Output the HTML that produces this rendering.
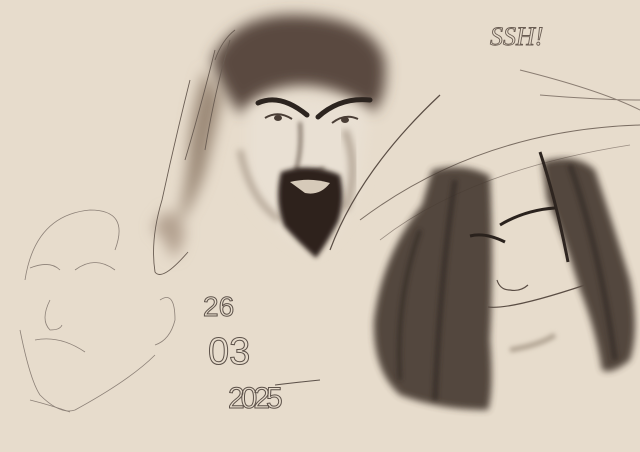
<!DOCTYPE html><html><head><style>
html,body{margin:0;padding:0;width:640px;height:452px;overflow:hidden;background:#e7dccc}
svg{display:block}
</style></head><body>
<svg width="640" height="452" viewBox="0 0 640 452" xmlns="http://www.w3.org/2000/svg">
<defs>
<filter id="b8" x="-50%" y="-50%" width="200%" height="200%"><feGaussianBlur stdDeviation="7"/></filter>
<filter id="b4" x="-50%" y="-50%" width="200%" height="200%"><feGaussianBlur stdDeviation="3.5"/></filter>
<filter id="b2" x="-50%" y="-50%" width="200%" height="200%"><feGaussianBlur stdDeviation="2.5"/></filter>
</defs>
<rect width="640" height="452" fill="#e7dccc"/>
<g filter="url(#b8)">
<path d="M212 60 Q235 12 300 15 Q372 18 385 60 Q388 100 372 112 Q335 82 292 86 Q252 92 242 115 Q222 92 212 60Z" fill="#5a4a3f"/>
<path d="M205 70 Q190 110 188 160 Q183 215 172 232 Q192 210 205 172 Q215 132 222 100Z" fill="#9c8a78"/>
<path d="M152 228 Q166 238 172 258 Q182 252 185 230 Q176 214 166 210Z" fill="#b3a190"/>
</g>
<path d="M248 112 Q300 82 368 112 L358 185 Q340 235 312 250 Q272 228 248 188Z" fill="#e9e0d3" filter="url(#b8)"/>
<path d="M240 150 Q250 200 280 220" stroke="#b3a595" stroke-width="6" fill="none" filter="url(#b4)"/>
<path d="M345 130 Q360 170 345 210" stroke="#b3a595" stroke-width="7" fill="none" filter="url(#b4)"/>
<path d="M258 103 Q280 93 307 115" stroke="#2c241f" stroke-width="5" fill="none" stroke-linecap="round"/>
<path d="M318 117 Q340 97 370 100" stroke="#2c241f" stroke-width="5" fill="none" stroke-linecap="round"/>
<path d="M265 118 Q278 110 292 119" stroke="#4a3e36" stroke-width="2" fill="none"/>
<ellipse cx="278" cy="118" rx="4" ry="3" fill="#4a3e36"/>
<path d="M332 123 Q345 113 358 119" stroke="#4a3e36" stroke-width="2" fill="none"/>
<ellipse cx="345" cy="120" rx="4" ry="3" fill="#4a3e36"/>
<path d="M300 122 Q302 150 296 170 Q310 176 324 168" stroke="#6a5b50" stroke-width="3" fill="none" filter="url(#b2)"/>
<path d="M281 172 Q310 162 340 175 Q346 200 338 222 Q326 245 316 258 Q298 242 284 226 Q274 200 281 172Z" fill="#2d231d" filter="url(#b2)"/>
<path d="M290 182 Q310 177 330 183 Q320 196 305 193Z" fill="#d6cab9"/>
<g stroke="#6a5d53" stroke-width="0.9" fill="none">
<path d="M230 40 Q215 90 205 150 M215 50 Q200 110 185 160 M190 80 Q175 140 162 200 Q150 240 155 272 Q162 282 188 252"/>
<path d="M235 30 Q222 40 215 60"/>
</g>
<path d="M440 95 Q360 170 330 250" stroke="#5a4d44" stroke-width="1.2" fill="none"/>
<path d="M360 220 Q480 130 640 125" stroke="#7a6d62" stroke-width="1" fill="none"/>
<path d="M380 240 Q470 170 630 145" stroke="#9a8d82" stroke-width="0.8" fill="none"/>
<path d="M520 70 Q600 90 640 110 M540 95 Q600 100 640 100" stroke="#8a7d72" stroke-width="1" fill="none"/>
<g filter="url(#b4)" opacity="0.92">
<path d="M432 170 Q465 162 490 176 Q494 260 490 340 Q494 390 488 410 Q440 410 400 395 Q372 370 374 320 Q382 255 422 205Z" fill="#463a32"/>
<path d="M542 162 Q575 152 595 170 Q615 230 630 280 Q640 330 630 360 Q612 375 602 370 Q596 330 580 290 Q562 230 547 200Z" fill="#463a32"/>
</g>
<g stroke="#2e2520" fill="none" filter="url(#b2)" opacity="0.7">
<path d="M455 180 Q440 280 435 400" stroke-width="5"/>
<path d="M420 230 Q395 300 400 380" stroke-width="4"/>
<path d="M570 165 Q600 250 615 360" stroke-width="5"/>
</g>
<path d="M540 152 Q556 200 568 262" stroke="#2e2520" stroke-width="3" fill="none"/>
<path d="M470 236 Q485 232 505 242 M500 225 Q525 210 555 208" stroke="#2a221d" stroke-width="3" fill="none"/>
<path d="M497 280 Q500 290 510 290 Q520 292 528 285 M488 307 Q510 310 585 285" stroke="#5a4d44" stroke-width="1.2" fill="none"/>
<path d="M510 350 Q540 345 555 335" stroke="#b0a392" stroke-width="5" fill="none" filter="url(#b2)"/>
<g stroke="#8c8077" stroke-width="0.8" fill="none">
<path d="M25 280 Q35 215 90 210 Q130 210 115 250"/>
<path d="M30 268 Q50 260 60 270 M75 270 Q95 255 115 270"/>
<path d="M50 300 Q40 320 50 330 Q60 330 62 325 M35 340 Q60 335 85 352"/>
<path d="M20 330 Q30 380 40 395 Q60 415 75 410 Q130 380 155 355"/>
<path d="M160 300 Q175 290 175 320 Q170 340 155 345"/>
<path d="M30 400 Q50 405 70 412"/>
</g>
<g font-family="Liberation Sans, sans-serif" fill="none" stroke="#5d524a" stroke-width="1">
<text x="203" y="316" font-size="28">26</text>
<text x="208" y="364" font-size="38">03</text>
<text x="228" y="408" font-size="30" letter-spacing="-4">2025</text>
</g>
<path d="M275 385 Q300 382 320 380" stroke="#5d524a" stroke-width="1" fill="none"/>
<text x="490" y="45" font-family="Liberation Serif, serif" font-style="italic" font-size="26" fill="none" stroke="#6a5d53" stroke-width="0.9">SSH!</text>
</svg>
</body></html>
